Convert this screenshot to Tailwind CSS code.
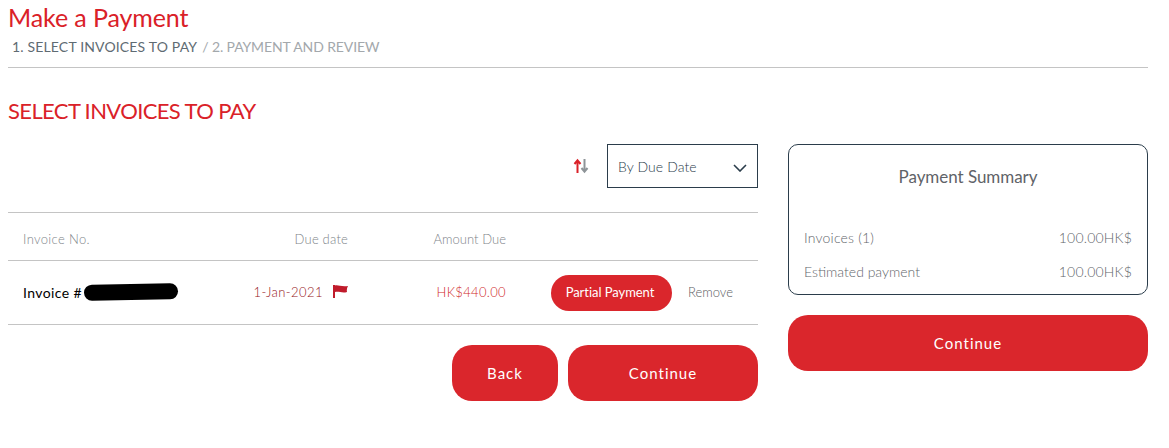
<!DOCTYPE html>
<html lang="en">
<head>
  <meta charset="UTF-8">
  <title>Make a Payment</title>
  <script src="https://cdn.jsdelivr.net/npm/@tailwindcss/browser@4"></script>
</head>
<body class="bg-white font-['Lato',sans-serif] overflow-hidden">
  <div class="w-[1169px] h-[448px] px-2">
    <!-- Header -->
    <header class="w-[1140px] h-[68px] border-b border-[#c4c4c4]">
      <h1 class="text-[25px] leading-[35px] tracking-[-0.1px] text-[#da2128]">Make a Payment</h1>
      <p class="pl-1 text-[14px] leading-[20px] mt-[2px] flex">
        <span class="text-[#5f6b73] tracking-[0.16px]">1. SELECT INVOICES TO PAY</span>
        <span class="ml-[5px] text-[#a3a8ac] tracking-[-0.12px]">/ 2. PAYMENT AND REVIEW</span>
      </p>
    </header>

    <h2 class="mt-[29px] text-[22px] leading-[28px] tracking-[-0.62px] text-[#da2128]">SELECT INVOICES TO PAY</h2>

    <div class="mt-[19px] flex gap-[30px]">
      <!-- Invoices -->
      <section class="w-[750px]">
        <div class="flex justify-end items-center gap-[18px]">
          <svg class="w-[16px] h-[16px] -mt-[1px]" viewBox="0 0 16 16" fill="none" stroke-width="2">
            <path d="M4.500 15V3M1.500 6l3-3.600 3 3.600" stroke="#da2128"/>
            <path d="M11.500 1v12M8.500 10l3 3.600 3-3.600" stroke="#8e9498"/>
          </svg>
          <div class="w-[151px] h-[44px] border border-[#2b3d4b] pl-[10px] pr-[10px] flex items-center justify-between text-[14px] font-light tracking-[0.1px] text-[#2b3d4b]">
            <span>By Due Date</span>
            <svg class="w-[14px] h-[8px] mt-[3px]" viewBox="0 0 14 8" fill="none" stroke="#2b3d4b" stroke-width="1.6"><path d="M1 1l6 6 6-6"/></svg>
          </div>
        </div>

        <div class="mt-[24px] border-t border-[#c4c4c4]">
          <div class="h-[48px] pt-[6px] flex items-center text-[13px] font-light text-[#80858a] border-b border-[#c4c4c4]">
            <div class="w-[340px] flex justify-between pl-[15px]"><span class="tracking-[0.35px]">Invoice No.</span><span class="tracking-[0.2px]">Due date</span></div>
            <div class="w-[158px] text-right tracking-[0.05px]">Amount Due</div>
          </div>
          <div class="h-[64px] flex items-center border-b border-[#c4c4c4]">
            <div class="w-[340px] flex items-center justify-between pl-[15px]">
              <div class="flex items-center text-[14px] text-black tracking-[0.4px]">
                <span>Invoice #</span>
                <span class="ml-[2px] w-[94px] h-[16px] bg-black rounded-[8px] -rotate-1 -mt-[2px]"></span>
              </div>
              <div class="flex items-center gap-[10px] text-[13px] font-light tracking-[0.45px] text-[#961522]">
                <span>1-Jan-2021</span>
                <svg class="w-[15px] h-[13px] -mt-[2px]" viewBox="0 0 15 13" fill="#c01b2b"><path d="M0 0h2v13H0zM2 .5c3-1 6 1.500 13 .5-1 2-1.500 3.500-1 6-5 1.500-8-1-12 0z"/></svg>
              </div>
            </div>
            <div class="w-[158px] text-right text-[13px] font-light tracking-[0.35px] text-[#cf1f28]">HK$440.00</div>
            <button class="ml-[45px] w-[121px] h-[36px] rounded-[18px] bg-[#da262c] text-white text-[13px] tracking-[-0.05px] pr-[3px]">Partial Payment</button>
            <span class="ml-[16px] text-[13px] font-light text-[#5c6063]">Remove</span>
          </div>
        </div>

        <div class="mt-[20px] flex justify-end gap-[10px]">
          <button class="w-[106px] h-[56px] rounded-[20px] bg-[#da262c] text-white text-[15px] tracking-[1px]">Back</button>
          <button class="w-[190px] h-[56px] rounded-[20px] bg-[#da262c] text-white text-[15px] tracking-[1px]">Continue</button>
        </div>
      </section>

      <!-- Payment Summary -->
      <aside class="w-[360px]">
        <div class="h-[151px] border border-[#2b3d4b] rounded-[10px] px-[15px] pt-[20px]">
          <h3 class="text-center text-[17px] leading-[24px] tracking-[-0.05px] text-[#5f6368]">Payment Summary</h3>
          <div class="mt-[39px] flex justify-between text-[14px] font-light leading-[20px] text-[#5f666b]"><span class="tracking-[0.2px]">Invoices (1)</span><span class="tracking-[0.2px]">100.00HK$</span></div>
          <div class="mt-[14px] flex justify-between text-[14px] font-light leading-[20px] text-[#5f666b]"><span>Estimated payment</span><span class="tracking-[0.2px]">100.00HK$</span></div>
        </div>
        <button class="mt-[20px] w-full h-[56px] rounded-[20px] bg-[#da262c] text-white text-[15px] tracking-[1px]">Continue</button>
      </aside>
    </div>
  </div>
</body>
</html>
